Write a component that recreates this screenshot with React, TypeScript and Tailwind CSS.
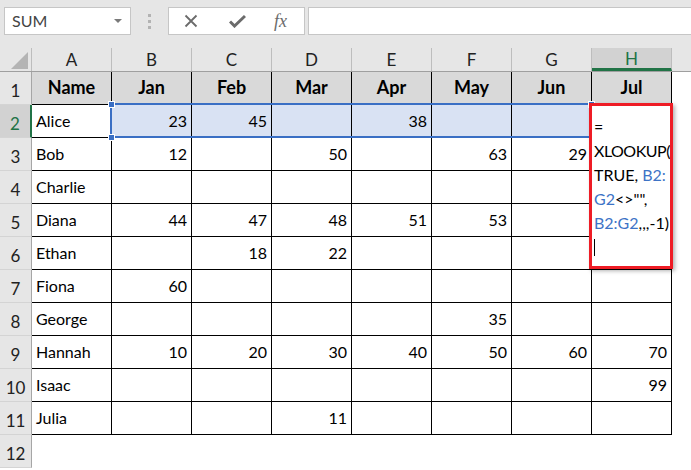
import React from 'react'

const cols = ['A', 'B', 'C', 'D', 'E', 'F', 'G', 'H']
const headers = ['Name', 'Jan', 'Feb', 'Mar', 'Apr', 'May', 'Jun', 'Jul']

// rows 2..11, columns A..H
const data: (string | number | null)[][] = [
  ['Alice', 23, 45, null, 38, null, null, null],
  ['Bob', 12, null, 50, null, 63, 29, null],
  ['Charlie', null, null, null, null, null, null, null],
  ['Diana', 44, 47, 48, 51, 53, null, null],
  ['Ethan', null, 18, 22, null, null, null, null],
  ['Fiona', 60, null, null, null, null, null, null],
  ['George', null, null, null, null, 35, null, null],
  ['Hannah', 10, 20, 30, 40, 50, 60, 70],
  ['Isaac', null, null, null, null, null, null, 99],
  ['Julia', null, null, 11, null, null, null, null],
]

const font = { fontFamily: 'Lato, "Open Sans", sans-serif' }

function Toolbar() {
  return (
    <div className="h-12 bg-[#e6e6e6] flex items-start pt-[7px] pl-1">
      {/* Name box */}
      <div className="w-[127px] h-[28px] bg-white border border-[#c6c6c6] flex items-center justify-between pl-[7px] pr-[8px]">
        <span className="text-[16px] text-[#444]">SUM</span>
        <svg width="8" height="5" viewBox="0 0 8 5">
          <path d="M0 0 L8 0 L4 4 Z" fill="#7a7a7a" />
        </svg>
      </div>
      {/* grip dots */}
      <div className="w-[37px] h-[28px] flex flex-col items-center justify-center gap-[3px]">
        <div className="w-[3px] h-[3px] bg-[#b3b3b3]" />
        <div className="w-[3px] h-[3px] bg-[#b3b3b3]" />
        <div className="w-[3px] h-[3px] bg-[#b3b3b3]" />
      </div>
      {/* cancel / enter / fx */}
      <div className="w-[137px] h-[28px] bg-white border border-[#c6c6c6] flex items-center pl-[15px]">
        <svg width="14" height="14" viewBox="0 0 14 14">
          <path d="M1.5 1.5 L12.5 12.5 M12.5 1.5 L1.5 12.5" stroke="#6b6b6b" strokeWidth="1.8" />
        </svg>
        <svg width="17" height="14" viewBox="0 0 17 14" className="ml-[31px]">
          <path d="M1 7.5 L5.5 12 L16 2" stroke="#6b6b6b" strokeWidth="3" fill="none" />
        </svg>
        <span
          className="ml-[28px] text-[18px] italic text-[#6b6b6b] leading-none"
          style={{ fontFamily: '"Liberation Serif", serif' }}
        >
          fx
        </span>
      </div>
      <div className="ml-[3px] flex-1 h-[28px] bg-white border border-[#c6c6c6] border-r-0" />
    </div>
  )
}

function ColumnHeader() {
  return (
    <div className="h-[24px] flex bg-[#e6e6e6] border-b border-[#9f9f9f]">
      <div className="w-[32px] border-r border-[#bdbdbd] flex items-end justify-end pr-[3px] pb-[2px]">
        <svg width="17" height="17" viewBox="0 0 17 17">
          <path d="M17 0 L17 17 L0 17 Z" fill="#b4b4b4" />
        </svg>
      </div>
      {cols.map((c) => {
        const sel = c === 'H'
        return (
          <div
            key={c}
            className={`w-[80px] flex items-center justify-center text-[17px] border-r border-[#bdbdbd] ${
              sel ? 'bg-[#d2d2d2] text-[#217346] border-b-[3px] border-b-[#217346] pt-[2px]' : 'text-[#222]'
            }`}
          >
            {c}
          </div>
        )
      })}
      <div className="flex-1" />
    </div>
  )
}

function RowHead({ n, selected }: { n: number; selected?: boolean }) {
  return (
    <div
      className={`w-[32px] h-[33px] shrink-0 flex items-end justify-center pb-[1px] text-[17px] border-b border-[#d4d4d4] ${
        selected ? 'bg-[#d2d2d2] text-[#217346] border-r-2 border-r-[#217346]' : 'bg-[#e6e6e6] text-[#222] border-r border-r-[#a6a6a6]'
      }`}
    >
      {n}
    </div>
  )
}

function Sheet() {
  return (
    <div className="relative">
      <ColumnHeader />
      {/* row 1: headers */}
      <div className="flex">
        <RowHead n={1} />
        {headers.map((h) => (
          <div
            key={h}
            className="w-[80px] h-[33px] shrink-0 bg-[#d9d9d9] border-r border-b border-black flex items-end justify-center pb-[3px] text-[18px] font-bold text-black"
          >
            {h}
          </div>
        ))}
      </div>
      {data.map((row, i) => (
        <div key={i} className="flex">
          <RowHead n={i + 2} selected={i === 0} />
          {row.map((v, j) => {
            const inSel = i === 0 && j >= 1 && j <= 6
            return (
              <div
                key={j}
                className={`w-[80px] h-[33px] shrink-0 border-r border-b border-black flex items-end pb-[4px] text-[16px] text-black ${
                  j === 0 ? 'justify-start pl-[4px]' : 'justify-end pr-[4px]'
                } ${inSel ? 'bg-[#d9e2f3]' : 'bg-white'}`}
              >
                {v}
              </div>
            )
          })}
        </div>
      ))}
      <div className="flex">
        <RowHead n={12} />
      </div>

      {/* selection B2:G2 */}
      <div className="absolute left-[110px] top-[55px] w-[483px] h-[35px] border-2 border-[#3a6fc4] pointer-events-none" />
      <div className="absolute left-[108px] top-[53px] w-[7px] h-[7px] bg-[#3a6fc4] border border-white" />
      <div className="absolute left-[108px] top-[86px] w-[7px] h-[7px] bg-[#3a6fc4] border border-white" />
      <div className="absolute left-[588px] top-[53px] w-[7px] h-[7px] bg-[#3a6fc4] border border-white" />

      {/* in-cell edit of H2 */}
      <div className="absolute left-[589px] top-[55px] w-[84px] h-[166px] bg-white border-[3px] border-[#ee1c25] shadow-[2px_2px_4px_rgba(0,0,0,0.3)] overflow-hidden pl-[2px] pt-[9px] text-[16px] leading-[24px] text-black whitespace-nowrap">
        <div>=</div>
        <div className="tracking-[-0.5px]">XLOOKUP(</div>
        <div>
          TRUE, <span className="text-[#3d73c6]">B2:</span>
        </div>
        <div>
          <span className="text-[#3d73c6]">G2</span>&lt;&gt;"",
        </div>
        <div>
          <span className="text-[#3d73c6]">B2:G2</span>,,,-1)
        </div>
        <div className="h-[24px] flex items-center">
          <div className="w-[1px] h-[17px] bg-black" />
        </div>
      </div>
    </div>
  )
}

export default function App() {
  return (
    <div className="w-[691px] h-[470px] overflow-hidden bg-white select-none" style={font}>
      <Toolbar />
      <Sheet />
    </div>
  )
}
